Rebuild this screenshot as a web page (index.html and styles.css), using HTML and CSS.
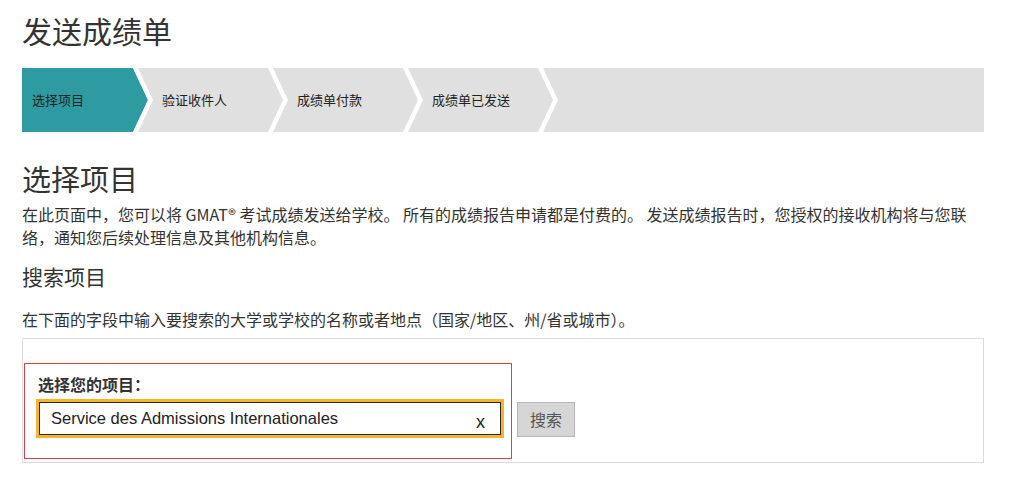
FILE: index.html
```html
<!DOCTYPE html>
<html lang="zh-CN">
<head>
<meta charset="utf-8">
<title>发送成绩单</title>
<link rel="stylesheet" href="styles.css">
</head>
<body>
<div class="page">
  <h1 class="title">发送成绩单</h1>
  <ol class="steps">
    <li class="step step-active">选择项目</li>
    <li class="step">验证收件人</li>
    <li class="step">成绩单付款</li>
    <li class="step">成绩单已发送</li>
  </ol>
  <h2 class="heading">选择项目</h2>
  <p class="intro">在此页面中，您可以将 GMAT® 考试成绩发送给学校。 所有的成绩报告申请都是付费的。 发送成绩报告时，您授权的接收机构将与您联络，通知您后续处理信息及其他机构信息。</p>
  <h3 class="subheading">搜索项目</h3>
  <p class="hint">在下面的字段中输入要搜索的大学或学校的名称或者地点（国家/地区、州/省或城市）。</p>
  <div class="search-box">
    <div class="field-group">
      <label class="field-label" for="program">选择您的项目：</label>
      <div class="field-input">
        <input id="program" class="text-input" type="text" value="Service des Admissions Internationales">
        <span class="clear">x</span>
      </div>
    </div>
    <button class="search-btn" type="button">搜索</button>
  </div>
</div>
</body>
</html>
```

FILE: styles.css
```css
html, body {
  margin: 0;
  padding: 0;
  background: #fff;
}
body {
  font-family: "Noto Sans CJK SC", "Noto Sans", sans-serif;
  color: #333;
}
.page {
  width: 962px;
  margin-left: 22px;
  padding-top: 10px;
}
.title {
  margin: 0;
  font-size: 30px;
  line-height: 40px;
  font-weight: 400;
  color: #333;
}
.steps {
  list-style: none;
  margin: 18px 0 0 0;
  padding: 0;
  display: flex;
  height: 64px;
  background: #e0e0e0;
}
.step {
  position: relative;
  width: 135px;
  flex: 0 0 135px;
  box-sizing: border-box;
  padding-left: 5px;
  font-size: 13px;
  line-height: 64px;
  color: #222;
  z-index: 0;
}
.step::after {
  content: "";
  position: absolute;
  top: 0;
  left: 111px;
  width: 22px;
  height: 64px;
  background: #fff;
  clip-path: polygon(0 0, 5px 0, 20px 32px, 5px 64px, 0 64px, 15px 32px);
}
.step-active {
  padding-left: 10px;
}
.step-active::before {
  content: "";
  position: absolute;
  top: 0;
  left: 0;
  width: 127px;
  height: 64px;
  background: #2d9ba1;
  clip-path: polygon(0 0, 111px 0, 126px 32px, 111px 64px, 0 64px);
  z-index: -1;
}
.heading {
  margin: 28px 0 0 0;
  font-size: 29px;
  line-height: 36px;
  font-weight: 400;
  color: #333;
}
.intro {
  margin: 7px 0 0 0;
  font-size: 16px;
  line-height: 23px;
}
.subheading {
  margin: 13px 0 0 0;
  font-size: 21px;
  line-height: 28px;
  font-weight: 400;
  color: #333;
}
.hint {
  margin: 18px 0 0 0;
  font-size: 16px;
  line-height: 23px;
}
.search-box {
  margin-top: 7px;
  border: 1px solid #dcdcdc;
  box-sizing: content-box;
  padding: 24px 0 0 1px;
  height: 99px;
  display: flex;
  align-items: flex-start;
}
.field-group {
  border: 1px solid #d0474b;
  padding: 9px 7px 20px 11px;
  display: flex;
  flex-direction: column;
}
.field-label {
  font-size: 16px;
  line-height: 22px;
  font-weight: 700;
  color: #333;
  margin-left: 2px;
  margin-bottom: 4px;
}
.field-input {
  width: 460px;
  height: 31px;
  border: 1px solid #2a2a2a;
  box-shadow: 0 0 0 3px #f4b52c;
  margin: 3px;
  display: flex;
  align-items: center;
  background: #fff;
}
.text-input {
  flex: 1;
  border: 0;
  outline: none;
  padding: 0 0 0 11px;
  font-family: "Liberation Sans", Arial, sans-serif;
  font-size: 16.5px;
  color: #222;
  background: transparent;
  height: 31px;
}
.clear {
  font-family: "Liberation Sans", Arial, sans-serif;
  font-size: 18px;
  color: #222;
  margin: 7px 15px 0 0;
}
.search-btn {
  margin: 39px 0 0 5px;
  width: 58px;
  height: 35px;
  padding: 0;
  border: 1px solid #b5b5b5;
  background: #d6d6d6;
  color: #555;
  font-family: "Noto Sans CJK SC", sans-serif;
  font-size: 16px;
  line-height: 33px;
}
```
